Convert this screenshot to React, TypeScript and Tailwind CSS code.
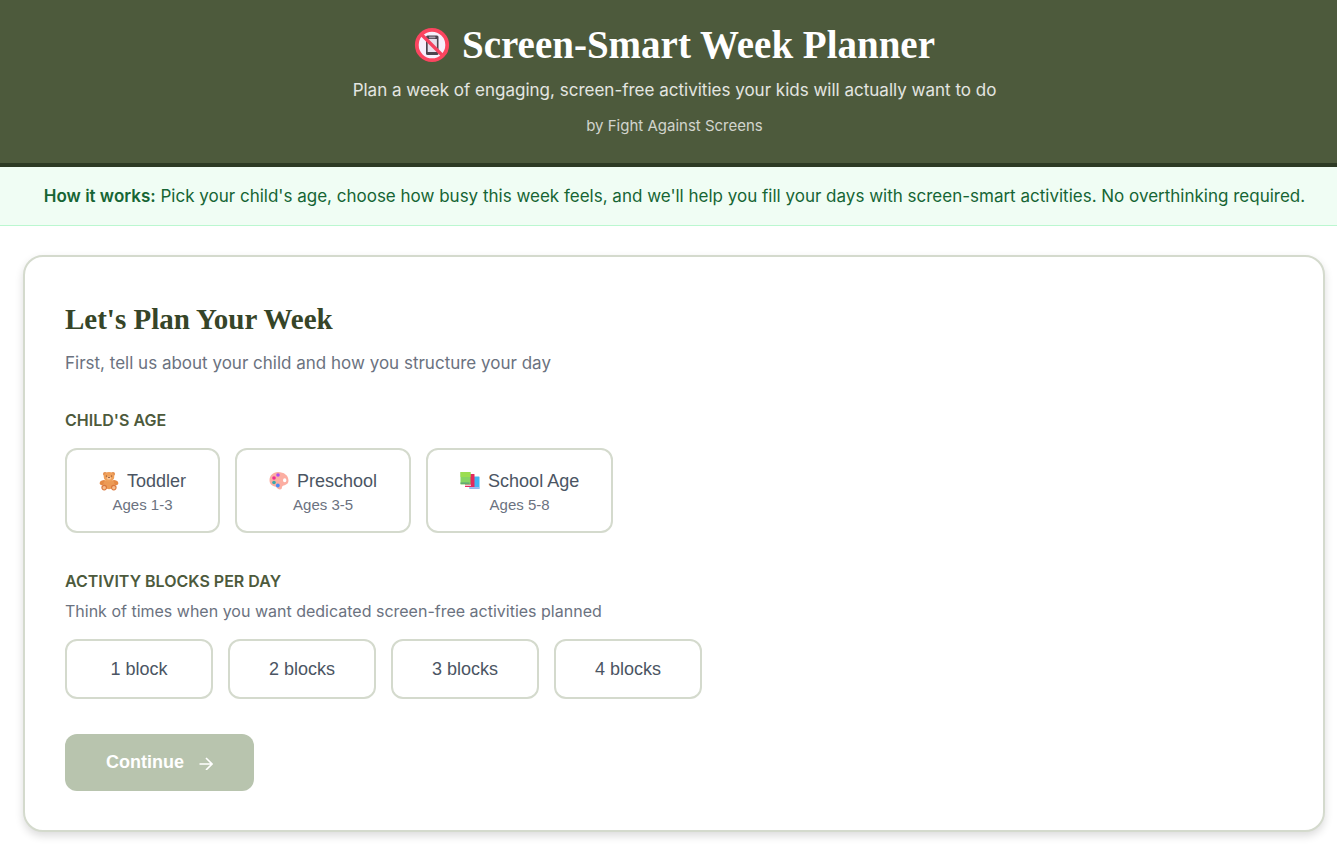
import React from 'react';

const NoPhones = () => (
    <svg viewBox="0 0 36 36" className="size-9 shrink-0" aria-hidden="true">
        <circle cx="18" cy="18" r="15" fill="#f6effc" />
        <rect x="12" y="8.5" width="12.5" height="19.5" rx="1.5" fill="#4b444f" />
        <rect x="13.7" y="12" width="9.2" height="13" fill="#e6deec" />
        <rect x="15" y="9.600" width="6.5" height="1.6" rx="0.6" fill="#a79cab" />
        <path d="M7.5 7.5 28.5 28.5" stroke="#f6405f" strokeWidth="3.4" />
        <circle cx="18" cy="18" r="15.2" fill="none" stroke="#fb4560" strokeWidth="3.8" />
    </svg>
);

const Bear = () => (
    <svg viewBox="0 0 20 20" className="size-5 shrink-0" aria-hidden="true">
        <circle cx="6" cy="3" r="2" fill="#e08a48" />
        <circle cx="14" cy="3" r="2" fill="#e08a48" />
        <ellipse cx="3.8" cy="11.6" rx="3.2" ry="2.3" fill="#e58a45" transform="rotate(-25 3.8 11.6)" />
        <ellipse cx="16.2" cy="11.6" rx="3.2" ry="2.3" fill="#e58a45" transform="rotate(25 16.2 11.6)" />
        <ellipse cx="10" cy="13.2" rx="5.6" ry="5" fill="#ec9a55" />
        <ellipse cx="10" cy="5.8" rx="5.3" ry="4.9" fill="#f0a05a" />
        <circle cx="5.2" cy="16.6" r="2.8" fill="#d9773d" />
        <circle cx="14.8" cy="16.6" r="2.8" fill="#d9773d" />
        <circle cx="5.2" cy="16.8" r="1.7" fill="#f7bd8b" />
        <circle cx="14.8" cy="16.8" r="1.7" fill="#f7bd8b" />
        <ellipse cx="10" cy="7.2" rx="2.1" ry="1.6" fill="#fac796" />
        <ellipse cx="10" cy="6.5" rx="0.9" ry="0.6" fill="#693b35" />
        <circle cx="7.4" cy="5" r="0.6" fill="#693b35" />
        <circle cx="12.6" cy="5" r="0.6" fill="#693b35" />
    </svg>
);

const Palette = () => (
    <svg viewBox="0 0 20 20" className="size-5 shrink-0" aria-hidden="true">
        <path
            fillRule="evenodd"
            fill="#fcaea2"
            d="M9 1C4 1 .5 4.6 .5 9.3 .5 13 3 15 6 15.600 8 16 8 18.500 11 18.500 14 18.500 12 15.600 14 14.800 16 14 19.500 13.500 19.500 9.500 19.500 4.500 15 1 9 1ZM15.700 7.200A1.700 2 0 1 1 15.700 11.200 1.700 2 0 0 1 15.700 7.200Z"
        />
        <circle cx="9" cy="4" r="1.8" fill="#b04df0" />
        <circle cx="5" cy="7" r="1.8" fill="#ef2c93" />
        <circle cx="5" cy="11.500" r="1.8" fill="#3ba9a8" />
        <circle cx="8.800" cy="14.500" r="1.9" fill="#4b8df5" />
    </svg>
);

const Books = () => (
    <svg viewBox="0 0 20 20" className="size-5 shrink-0" aria-hidden="true">
        <rect x="9.500" y="5.500" width="10" height="12.500" rx="0.6" fill="#41b6f2" />
        <rect x="9.500" y="16" width="9.500" height="1.800" fill="#a9b9ee" />
        <rect x="5" y="3" width="9.500" height="13" rx="0.6" fill="#e32a5d" />
        <rect x="5" y="13.500" width="6" height="1.500" fill="#efbdd5" />
        <rect x="0.500" y="1" width="10" height="12.500" rx="0.6" fill="#86d464" />
        <rect x="0.500" y="1" width="10" height="5" rx="0.6" fill="#9bdd50" />
        <rect x="0.500" y="11.500" width="9" height="1.300" fill="#5a9f77" />
    </svg>
);

const ages = [
    { label: 'Toddler', range: 'Ages 1-3', icon: <Bear /> },
    { label: 'Preschool', range: 'Ages 3-5', icon: <Palette /> },
    { label: 'School Age', range: 'Ages 5-8', icon: <Books /> },
];

const blocks = ['1 block', '2 blocks', '3 blocks', '4 blocks'];

const serif = "font-['Liberation_Serif',serif] font-bold";
const buttonFont = "font-['Liberation_Sans',Arial,sans-serif] text-[18px]";

export default function App() {
    return (
        <div className="min-h-screen bg-white font-['Inter',sans-serif]">
            <header className="border-b-4 border-[#2d3a24] bg-[#4d5a3c] pt-5 pb-[25px] pl-6 pr-3 text-center text-white">
                <h1 className={`flex items-center justify-center gap-3 text-[39px] leading-[50px] ${serif}`}>
                    <NoPhones />
                    Screen-Smart Week Planner
                </h1>
                <p className="mt-1 text-[17px] leading-8 text-white/85">
                    Plan a week of engaging, screen-free activities your kids will actually want to do
                </p>
                <p className="mt-2 text-[15px] leading-6 text-white/75">by Fight Against Screens</p>
            </header>

            <section className="border-b border-[#bbf7d0] bg-[#f0fdf4] py-[14px] pl-6 pr-3 text-center text-[17px] leading-[30px] text-[#166534]">
                <strong className="font-semibold">How it works:</strong> Pick your child's age, choose how busy this week feels, and we'll help you fill your days with screen-smart activities. No overthinking required.
            </section>

            <main className="pt-[29px] pb-4 pl-[23px] pr-3">
                <div className="rounded-[20px] border-2 border-[#d4dacd] bg-white p-10 pb-[39px] shadow-[0_4px_8px_rgba(0,0,0,0.14)]">
                    <h2 className={`text-[29px] leading-[44px] text-[#364528] ${serif}`}>Let's Plan Your Week</h2>
                    <p className="mt-[7px] text-[17px] leading-[30px] text-[#6b7280]">
                        First, tell us about your child and how you structure your day
                    </p>

                    <fieldset className="mt-7">
                        <legend className="text-[16px] leading-7 font-semibold text-[#4d5a3c] uppercase">Child's Age</legend>
                        <div className="mt-[14px] flex flex-wrap gap-[15px]">
                            {ages.map((age) => (
                                <button
                                    key={age.label}
                                    type="button"
                                    className={`rounded-xl border-2 border-[#d4dacd] bg-white px-8 pt-[18px] pb-4 text-[#4b5563] ${buttonFont}`}
                                >
                                    <span className="flex items-center gap-2 leading-[26px]">
                                        {age.icon}
                                        {age.label}
                                    </span>
                                    <span className="block text-[15px] leading-[21px] text-[#6b7280]">{age.range}</span>
                                </button>
                            ))}
                        </div>
                    </fieldset>

                    <fieldset className="mt-[34px]">
                        <legend className="text-[16px] leading-7 font-semibold text-[#4d5a3c] uppercase">Activity Blocks Per Day</legend>
                        <p className="mt-[2px] text-[16px] leading-7 text-[#6b7280]">
                            Think of times when you want dedicated screen-free activities planned
                        </p>
                        <div className="mt-[14px] flex flex-wrap gap-[15px]">
                            {blocks.map((block) => (
                                <button
                                    key={block}
                                    type="button"
                                    className={`min-w-[148px] rounded-xl border-2 border-[#d4dacd] bg-white px-8 py-4 leading-6 text-[#4b5563] ${buttonFont}`}
                                >
                                    {block}
                                </button>
                            ))}
                        </div>
                    </fieldset>

                    <button
                        type="button"
                        disabled
                        className={`mt-[35px] flex items-center gap-[15px] rounded-xl bg-[#b8c4ae] px-[41px] py-4 leading-[25px] font-bold text-white ${buttonFont}`}
                    >
                        Continue
                        <svg viewBox="0 0 14 14" className="size-[14px]" fill="none" stroke="currentColor" strokeWidth="1.6" aria-hidden="true">
                            <path d="M0.500 8H13M7 2 13 8 7 14" />
                        </svg>
                    </button>
                </div>
            </main>
        </div>
    );
}
